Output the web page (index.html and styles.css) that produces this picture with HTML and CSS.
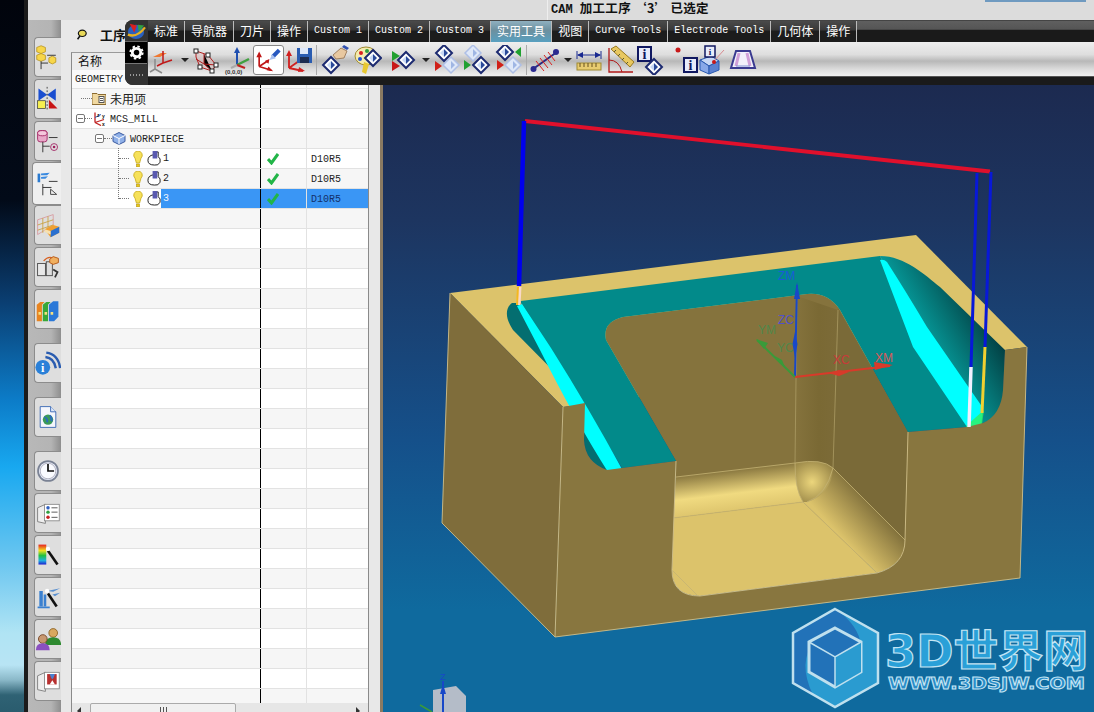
FILE: index.html
```html
<!DOCTYPE html>
<html lang="zh">
<head>
<meta charset="utf-8">
<title>CAM</title>
<link rel="stylesheet" href="styles.css">
</head>
<body>
<svg class="defs" width="0" height="0">
  <defs>
    <g id="dia"><polygon points="0,-8 8,0 0,8 -8,0" fill="#fff" stroke="#1c2a70" stroke-width="2"/><polygon points="0,-4 4,0 0,4" fill="#2a4a9a"/><polygon points="0,-4 -4,0 0,4" fill="#c8d8f4"/></g>
    <g id="diaf"><polygon points="0,-8 8,0 0,8 -8,0" fill="#dfe8f8" stroke="#aebfe6" stroke-width="1.5"/><polygon points="0,-4 4,0 0,4" fill="#9fb6e4"/></g>
    <g id="bulb"><path d="M5 0a4.2 4.2 0 0 1 3 7.2L6.6 12H3.4L2 7.2A4.2 4.2 0 0 1 5 0z" fill="#f6e15a" stroke="#c8a818" stroke-width=".8"/><rect x="3.4" y="13" width="3.2" height="3" fill="#e8c820" stroke="#a88810" stroke-width=".5"/></g>
    <g id="opi"><path d="M1 10q0-5 6-6v-3h5v5q3 2 2 6q-2 4-6 3q-7 0-7-5z" fill="#fff" stroke="#111" stroke-width="1"/><rect x="6" y="0" width="5" height="8" fill="#5a5ab0"/></g>
    <path id="chk" d="M1 6l3.5 4L11 1" fill="none" stroke="#22b548" stroke-width="3"/>
  </defs>
</svg>
<div class="screen">
  <aside class="desktop"></aside>
  <div class="app">
    <header class="titlebar">
      <div class="title-left"></div>
      <div class="title-main"><span class="cam">CAM</span> 加工工序 ‘3’ 已选定</div>
      <div class="title-progress"></div>
    </header>
    <div class="workspace">
      <nav class="rail">
        <div class="tab"><svg viewBox="0 0 30 30"><path d="M7 2l5 2v5l-5 2-5-2V4z" fill="#f7d64a" stroke="#b08a10" stroke-width=".8"/><path d="M7 11l5 2v5l-5 2-5-2v-5z" fill="#f7d64a" stroke="#b08a10" stroke-width=".8"/><path d="M20 14l4 2v5l-4 2-4-2v-5z" fill="#f7d64a" stroke="#b08a10" stroke-width=".8"/><path d="M7 20v9M7 22h8M14 13h10" stroke="#222" fill="none"/></svg></div>
        <div class="tab"><svg viewBox="0 0 30 30"><path d="M4 3l10 7 10-7v14l-10-7-10 7z" fill="#1a4ed0"/><rect x="3" y="17" width="9" height="9" fill="#f6ee50" stroke="#333" stroke-width=".8"/><path d="M16 16l10 10H16z" fill="#c81414"/><path d="M14 1v28" stroke="#333" stroke-dasharray="2 2"/></svg></div>
        <div class="tab"><svg viewBox="0 0 30 30"><rect x="3" y="3" width="11" height="13" rx="3" fill="#e8a8c8" stroke="#a02060"/><ellipse cx="8.500" cy="6" rx="5.500" ry="3" fill="#f4c8dc" stroke="#a02060"/><path d="M9 16v12M9 21h8M16 11h10" stroke="#222" fill="none"/><circle cx="22" cy="22" r="4" fill="none" stroke="#a02060"/><circle cx="22" cy="22" r="1.500" fill="#a02060"/></svg></div>
        <div class="tab active"><svg viewBox="0 0 30 30"><path d="M3 3h3v10H3z" fill="#2a7ad0"/><path d="M7 3l10-1-3 3H7zM7 7l8-1-3 3H7z" fill="#3a8ae0"/><path d="M9 15v13M9 19h10M16 12h10" stroke="#222" fill="none"/><path d="M18 21v6h7z" fill="none" stroke="#333"/></svg></div>
        <div class="tab"><svg viewBox="0 0 30 30"><path d="M3 9l18-6v12L3 26z" fill="none" stroke="#d89aa0"/><path d="M3 15l18-6M3 21l18-6M9 7v17M15 5v17" stroke="#c8a040"/><path d="M11 20l10-5 7 2v7l-10 5z" fill="#f0a030"/><path d="M18 29l10-5v-7l-10 5z" fill="#2a70d0"/><path d="M11 20l7 2v4l-7-3z" fill="#f6e0b0"/></svg></div>
        <div class="tab"><svg viewBox="0 0 30 30"><rect x="3" y="11" width="9" height="14" fill="#e8e8e8" stroke="#444"/><rect x="13" y="9" width="7" height="16" fill="#ddd" stroke="#444"/><path d="M10 8q6-7 13-2" fill="none" stroke="#d86020" stroke-width="1.500"/><path d="M21 3l6 2v5l-6 2-4-2V6z" fill="#f0b060" stroke="#b05010"/><path d="M21 18l5 3-3 6" fill="none" stroke="#333" stroke-width="2"/></svg></div>
        <div class="tab"><svg viewBox="0 0 30 30"><path d="M2 10l4-3h5l-3 3v19H2z" fill="#e88420"/><path d="M9 10l4-3h5l-3 3v19H9z" fill="#38a838"/><path d="M16 10l5-4h6v18l-5 5h-6z" fill="#2a78d8"/><path d="M4 20h3M11 20h3M18 20h3" stroke="#f6e080" stroke-width="3"/></svg></div>
        <div class="tab tab-gap"><svg viewBox="0 0 30 30"><circle cx="9" cy="20" r="8.500" fill="#2a80d8"/><text class="icon-i" x="9" y="25">i</text><path d="M12 8q10 1 12 13M13 3q14 2 16 18" fill="none" stroke="#2a5cb0" stroke-width="2.800"/></svg></div>
        <div class="tab tab-gap"><svg viewBox="0 0 30 30"><path d="M6 3h12l6 6v18H6z" fill="#f4f6fc" stroke="#3060b0"/><path d="M18 3v6h6" fill="#dce6f8" stroke="#3060b0"/><circle cx="15" cy="18" r="6" fill="#3a9a58"/><path d="M11 15q4 2 3 6M17 13q3 3 2 7" stroke="#2a6ac0" fill="none" stroke-width="2"/></svg></div>
        <div class="tab tab-gap"><svg viewBox="0 0 30 30"><circle cx="15" cy="15" r="11.500" fill="#e8ecf8" stroke="#7a8294" stroke-width="2"/><circle cx="15" cy="15" r="9" fill="#fafbff" stroke="#aab"/><path d="M15 7v8h7" fill="none" stroke="#111" stroke-width="2"/></svg></div>
        <div class="tab"><svg viewBox="0 0 30 30"><path d="M3 9l9-4v22l-9-2z" fill="#eee" stroke="#777"/><rect x="11" y="5" width="17" height="19" fill="#fff" stroke="#888"/><circle cx="15" cy="9" r="2" fill="#3060c0"/><circle cx="15" cy="14" r="2" fill="#30a040"/><circle cx="15" cy="20" r="2" fill="#c82020"/><path d="M19 9h7M19 14h7M19 20h7" stroke="#444"/></svg></div>
        <div class="tab"><svg viewBox="0 0 30 30"><defs><linearGradient id="rb" x1="0" y1="0" x2="0" y2="1"><stop offset="0" stop-color="#e82020"/><stop offset=".3" stop-color="#f0e020"/><stop offset=".55" stop-color="#20c040"/><stop offset=".8" stop-color="#20b0e0"/><stop offset="1" stop-color="#2020d0"/></linearGradient></defs><rect x="4" y="3" width="9" height="23" fill="url(#rb)"/><path d="M15 10l11 16" stroke="#111" stroke-width="3"/><circle cx="15" cy="8" r="2.500" fill="#fff"/></svg></div>
        <div class="tab"><svg viewBox="0 0 30 30"><path d="M5 26V8h4v18zM10 12h3v14h-3z" fill="#3a80d0"/><path d="M3 27h14" stroke="#3a80d0" stroke-width="2"/><path d="M14 8l15-3-8 4zM20 12l9-2-6 4z" fill="#5a90d0"/><path d="M15 11l10 15" stroke="#111" stroke-width="3"/><circle cx="14" cy="8" r="2.500" fill="#fff"/></svg></div>
        <div class="tab"><svg viewBox="0 0 30 30"><circle cx="21" cy="8" r="5" fill="#d8a860" stroke="#8a6020"/><path d="M12 20q1-7 9-7t9 7v2H12z" fill="#2e8a30"/><circle cx="9" cy="15" r="5" fill="#c89870" stroke="#704020"/><path d="M1 28q0-8 8-8t8 8z" fill="#8a50c0"/></svg></div>
        <div class="tab"><svg viewBox="0 0 30 30"><path d="M3 9l9-4v22l-9-2z" fill="#eee" stroke="#777"/><rect x="11" y="5" width="17" height="19" fill="#fff" stroke="#888"/><rect x="14" y="7" width="11" height="12" fill="#b83030"/><path d="M17 7q2 6 3 6t3-6z" fill="#4a80d0"/><path d="M17 19l3-5 3 5z" fill="#fff"/></svg></div>
      </nav>
      <section class="panel">
        <div class="panel-title">
          <svg class="panel-icon" viewBox="0 0 14 14"><ellipse cx="8" cy="5.500" rx="5" ry="4" fill="#e8d858" stroke="#111" stroke-width="1.500"/><path d="M5 9l-3 4" stroke="#111" stroke-width="2"/></svg>
          <span>工序</span>
        </div>
        <div class="table">
          <div class="head-row"><span class="head-name">名称</span></div>
          <div class="row sub"><div class="c-name geo">GEOMETRY</div><div class="c-stat"></div><div class="c-tool"></div></div>
          <div class="rows">
            <div class="row"><div class="c-name lv0"><i class="twig w11"></i><svg class="node" viewBox="0 0 14 14"><path d="M0 2h5l1 1h8v10H0z" fill="#f0d8a0" stroke="#8a6a30"/><rect x="7" y="5" width="5" height="6" fill="#fff" stroke="#555"/><path d="M8 7h3M8 9h3" stroke="#555"/></svg><span class="zh">未用项</span></div><div class="c-stat"></div><div class="c-tool"></div></div>
            <div class="row"><div class="c-name lv1"><i class="minus"></i><i class="twig w7"></i><svg class="node" viewBox="0 0 14 14"><path d="M3 11V1M3 11l9-3M3 11l6 3" stroke="#c02020" fill="none" stroke-width="1.300"/><path d="M3 6l6-3" stroke="#2a60c0"/><text class="axis-mini" x="5" y="5">z</text><text class="axis-mini" x="10" y="6">y</text><text class="axis-mini" x="10" y="14">x</text></svg><span class="mono">MCS_MILL</span></div><div class="c-stat"></div><div class="c-tool"></div></div>
            <div class="row"><div class="c-name lv2"><i class="minus"></i><i class="twig w8"></i><svg class="node" viewBox="0 0 14 14"><path d="M7 1l6 3v6l-6 3-6-3V4z" fill="#8fb0e8" stroke="#3a5aa0"/><path d="M1 4l6 3 6-3M7 7v6" stroke="#fff" fill="none"/></svg><span class="mono">WORKPIECE</span></div><div class="c-stat"></div><div class="c-tool"></div></div>
            <div class="row"><div class="c-name lv3"><i class="twig w10 riser"></i><svg class="bulb" viewBox="0 0 10 16"><use href="#bulb"/></svg><svg class="node" viewBox="0 0 15 16"><use href="#opi"/></svg><span class="mono label">1</span></div><div class="c-stat"><svg class="check" viewBox="0 0 12 12"><use href="#chk"/></svg></div><div class="c-tool mono">D10R5</div></div>
            <div class="row"><div class="c-name lv3"><i class="twig w10 riser"></i><svg class="bulb" viewBox="0 0 10 16"><use href="#bulb"/></svg><svg class="node" viewBox="0 0 15 16"><use href="#opi"/></svg><span class="mono label">2</span></div><div class="c-stat"><svg class="check" viewBox="0 0 12 12"><use href="#chk"/></svg></div><div class="c-tool mono">D10R5</div></div>
            <div class="row selected"><div class="c-name lv3"><i class="twig w10 riser last"></i><svg class="bulb" viewBox="0 0 10 16"><use href="#bulb"/></svg><svg class="node" viewBox="0 0 15 16"><use href="#opi"/></svg><span class="mono label">3</span></div><div class="c-stat"><svg class="check" viewBox="0 0 12 12"><use href="#chk"/></svg></div><div class="c-tool mono">D10R5</div></div>
            <div class="row"><div class="c-name"></div><div class="c-stat"></div><div class="c-tool"></div></div>
            <div class="row"><div class="c-name"></div><div class="c-stat"></div><div class="c-tool"></div></div>
            <div class="row"><div class="c-name"></div><div class="c-stat"></div><div class="c-tool"></div></div>
            <div class="row"><div class="c-name"></div><div class="c-stat"></div><div class="c-tool"></div></div>
            <div class="row"><div class="c-name"></div><div class="c-stat"></div><div class="c-tool"></div></div>
            <div class="row"><div class="c-name"></div><div class="c-stat"></div><div class="c-tool"></div></div>
            <div class="row"><div class="c-name"></div><div class="c-stat"></div><div class="c-tool"></div></div>
            <div class="row"><div class="c-name"></div><div class="c-stat"></div><div class="c-tool"></div></div>
            <div class="row"><div class="c-name"></div><div class="c-stat"></div><div class="c-tool"></div></div>
            <div class="row"><div class="c-name"></div><div class="c-stat"></div><div class="c-tool"></div></div>
            <div class="row"><div class="c-name"></div><div class="c-stat"></div><div class="c-tool"></div></div>
            <div class="row"><div class="c-name"></div><div class="c-stat"></div><div class="c-tool"></div></div>
            <div class="row"><div class="c-name"></div><div class="c-stat"></div><div class="c-tool"></div></div>
            <div class="row"><div class="c-name"></div><div class="c-stat"></div><div class="c-tool"></div></div>
            <div class="row"><div class="c-name"></div><div class="c-stat"></div><div class="c-tool"></div></div>
            <div class="row"><div class="c-name"></div><div class="c-stat"></div><div class="c-tool"></div></div>
            <div class="row"><div class="c-name"></div><div class="c-stat"></div><div class="c-tool"></div></div>
            <div class="row"><div class="c-name"></div><div class="c-stat"></div><div class="c-tool"></div></div>
            <div class="row"><div class="c-name"></div><div class="c-stat"></div><div class="c-tool"></div></div>
            <div class="row"><div class="c-name"></div><div class="c-stat"></div><div class="c-tool"></div></div>
            <div class="row"><div class="c-name"></div><div class="c-stat"></div><div class="c-tool"></div></div>
            <div class="row"><div class="c-name"></div><div class="c-stat"></div><div class="c-tool"></div></div>
            <div class="row"><div class="c-name"></div><div class="c-stat"></div><div class="c-tool"></div></div>
            <div class="row"><div class="c-name"></div><div class="c-stat"></div><div class="c-tool"></div></div>
            <div class="row"><div class="c-name"></div><div class="c-stat"></div><div class="c-tool"></div></div>
          </div>
          <div class="scrollbar"><span class="arrow-l"></span><span class="thumb"><i></i></span><span class="arrow-r"></span></div>
        </div>
      </section>
      <main class="viewport">
        <svg class="model" viewBox="383 20 711 692">
          <defs>
            <linearGradient id="slotR" gradientUnits="userSpaceOnUse" x1="925" y1="345" x2="985" y2="310"><stop offset="0" stop-color="#06a0a0"/><stop offset=".5" stop-color="#056f70"/><stop offset="1" stop-color="#023c40"/></linearGradient>
            <linearGradient id="fillVert" x1="0" y1="0" x2="1" y2="0"><stop offset="0" stop-color="#85733d"/><stop offset=".55" stop-color="#7a6934"/><stop offset="1" stop-color="#7c6b38"/></linearGradient>
            <linearGradient id="fillBack" gradientUnits="userSpaceOnUse" x1="735" y1="470" x2="740" y2="512"><stop offset="0" stop-color="#8a7840"/><stop offset=".55" stop-color="#f0da80"/><stop offset="1" stop-color="#dcc36b"/></linearGradient>
            <linearGradient id="fillRight" gradientUnits="userSpaceOnUse" x1="878" y1="505" x2="842" y2="538"><stop offset="0" stop-color="#7a6a38"/><stop offset="1" stop-color="#dcc36b"/></linearGradient>
            <radialGradient id="corner" gradientUnits="userSpaceOnUse" cx="812" cy="482" r="24"><stop offset="0" stop-color="#ecd67c"/><stop offset="1" stop-color="#9a8748"/></radialGradient>
          </defs>
          <polygon points="450,293 916,235 1027,347 563,407" fill="#dcc36b"/>
          <path d="M512 303C505 308 505 318 513 330L585 403L584 440Q585 462 607 470L622 470L520 303Z" fill="#046e70"/>
          <path d="M880 256C905 256 925 275 940 287L1005 350L1003 392Q1000 418 983 423L967 427Z" fill="url(#slotR)"/>
          <path d="M606 340Q602 322 623 317L807 294Q828 292 840 310L908 432L908 560L672 580L676 461Z" fill="#85733d"/>
          <polygon points="797,296 838,310 833,468 795,463" fill="url(#fillVert)"/>
          <polygon points="838,308 908,432 905,540 833,468" fill="#7a6a38"/>
          <polygon points="676,477 795,463 803,502 673,518" fill="url(#fillBack)"/>
          <path d="M833 468L905 540Q905 565 877 573L803 502Q826 496 833 468Z" fill="url(#fillRight)"/>
          <path d="M795 463Q822 458 833 468Q832 494 807 502L803 502Q795 490 795 463Z" fill="url(#corner)"/>
          <path d="M673 518L803 502L877 573L700 596Q672 596 672 570Z" fill="#dcc36b"/>
          <path d="M676 477L795 463Q822 458 833 468L905 540M673 518L803 502L877 573M672 570L698 596M803 502Q795 490 795 463M807 502Q826 496 833 468" fill="none" stroke="#c4b273" stroke-width=".8"/>
          <path d="M797 296L795 463M838 310L833 468" fill="none" stroke="#b0a068" stroke-width=".7"/>
          <path d="M521 301L880 256L967 427L908 432L840 310Q828 292 807 294L623 317Q602 322 606 340L676 461L622 468Q570 380 521 303Z" fill="#028a8a"/>
          <path d="M517 306L522 304L551 348Q590 410 623 471L608 472Q575 420 540 350Z" fill="#00ffff"/>
          <path d="M880 260Q884 259 887 262Q905 290 927 327L983 408L981 427L967 427L913 347Z" fill="#00ffff"/>
          <path d="M607 471L623 471L620 475L610 475Z" fill="#30f060"/>
          <path d="M966 426L984 410L982 424Q975 430 968 428Z" fill="#30f060" opacity=".8"/>
          <path d="M563 407L585 403L584 440Q585 462 607 470L622 468L676 461L672 570Q672 596 700 596L877 573Q905 565 905 540L908 432L967 427L983 423Q1001 415 1003 390L1005 350L1027 347L1020 578L555 637Z" fill="#88763f"/>
          <polygon points="450,293 563,407 555,637 442,523" fill="#7f6d3b"/>
          <path d="M450 293L442 523L555 637L1020 578L1027 347M563 407L555 637M676 461L672 570Q672 596 700 596L877 573Q905 565 905 540L908 432" fill="none" stroke="#d0c08a" stroke-width=".9"/>
          <line x1="525" y1="121" x2="990" y2="171.500" stroke="#e0102c" stroke-width="3.800"/>
          <line x1="524" y1="121" x2="519" y2="286" stroke="#0000ee" stroke-width="4.500"/>
          <line x1="519.500" y1="287" x2="518.500" y2="305" stroke="#f8d8c8" stroke-width="4"/>
          <line x1="518" y1="287" x2="517" y2="305" stroke="#f4b820" stroke-width="2"/>
          <line x1="977" y1="173" x2="971" y2="367" stroke="#0818d8" stroke-width="3"/>
          <line x1="991" y1="172" x2="985" y2="347" stroke="#0818d8" stroke-width="3"/>
          <line x1="971" y1="367" x2="969" y2="427" stroke="#f0f0ff" stroke-width="3.500"/>
          <line x1="985" y1="347" x2="982" y2="413" stroke="#f0d030" stroke-width="3"/>
          <path d="M795 377L797 285" stroke="#1848c8" stroke-width="2" fill="none"/>
          <path d="M797 282l3 17h-6zM795 332l2.500 12-2.500 14-2.500-14z" fill="#1848c8"/>
          <path d="M795 377L890 366" stroke="#d83a2a" stroke-width="2"/>
          <path d="M893 365l-18 5-1-8zM828 373l11 3 10-4-10-2z" fill="#d83a2a"/>
          <path d="M795 377L757 340" stroke="#3a9a3a" stroke-width="2"/>
          <path d="M756 339l12 4-4 6zM775 356l7 9 3 2-3-7z" fill="#3a9a3a"/>
          <text class="axis zm" x="778" y="280">ZM</text>
          <text class="axis zc" x="778" y="324">ZC</text>
          <text class="axis ym" x="758" y="334">YM</text>
          <text class="axis ym" x="777" y="352">YC</text>
          <text class="axis xc" x="833" y="364">XC</text>
          <text class="axis xm" x="875" y="362">XM</text>
          <path d="M433 690L456 686L466 696V712H433Z" fill="#b4bcc8"/>
          <path d="M443 681V712" stroke="#1848c8" stroke-width="2"/>
          <path d="M443 684l3 10h-6z" fill="#1848c8"/>
          <text class="axis tiny-z" x="440" y="680">Z</text>
          <path d="M420 705L432 712" stroke="#3a9a3a" stroke-width="1.500"/>
          <g class="logo">
            <polygon points="835,609 878,633 878,683 835,707 793,683 793,633" fill="#2a9bd0"/>
            <path d="M835 609L793 633V683L813 695Q797 662 815 640L860 640Q855 622 835 609Z" fill="#2272b8"/>
            <polygon points="835,628 861,642 861,672 835,687 809,672 809,642" fill="#2272b8" stroke="#bfe0ee" stroke-width="3"/>
            <polygon points="835,657 861,642 861,672 835,687" fill="#2a9bd0"/>
            <path d="M809 642L835 657L861 642M835 657V687" fill="none" stroke="#bfe0ee" stroke-width="1.500"/>
            <polygon points="835,609 878,633 878,683 835,707 793,683 793,633" fill="none" stroke="#bfe0ee" stroke-width="2.500"/>
            <text class="logo-main" x="885" y="667" textLength="203" lengthAdjust="spacingAndGlyphs">3D世界网</text>
            <text class="logo-sub" x="888" y="689" textLength="197" lengthAdjust="spacingAndGlyphs">WWW.3DSJW.COM</text>
          </g>
        </svg>
      </main>
    </div>
  </div>
</div>
<div class="toolbar">
  <div class="tool-side">
    <div class="side-logo"><svg viewBox="0 0 22 20"><ellipse cx="11" cy="11" rx="9" ry="8" fill="#2a60c0"/><path d="M4 2l8 2-3 8z" fill="#d82020"/><path d="M13 3l7 1-6 7z" fill="#30a040"/><path d="M2 14q10 4 19-8" fill="none" stroke="#e8b020" stroke-width="2.500"/></svg></div>
    <div class="side-gear"><svg viewBox="0 0 16 16"><circle cx="8" cy="8" r="4.500" fill="none" stroke="#fff" stroke-width="3"/><circle cx="8" cy="8" r="6.600" fill="none" stroke="#fff" stroke-width="2" stroke-dasharray="2.600 2.600"/></svg></div>
    <div class="side-grip"></div>
  </div>
  <div class="tool-body">
    <div class="tabs">
      <span class="t">标准</span><span class="t">导航器</span><span class="t">刀片</span><span class="t">操作</span><span class="t m">Custom 1</span><span class="t m">Custom 2</span><span class="t m">Custom 3</span><span class="t on">实用工具</span><span class="t">视图</span><span class="t m">Curve Tools</span><span class="t m">Electrode Tools</span><span class="t">几何体</span><span class="t">操作</span>
    </div>
    <div class="tools">
      <svg class="ti" viewBox="0 0 30 30"><path d="M7 14L7 24L14 28M7 24L2 27" stroke="#8a8a8a" fill="none" stroke-width="1.500"/><path d="M5 12l8-4h6l-7 4z" fill="#f07830"/><path d="M15 18V6M15 18l9-3M15 18l-6 3" stroke="#c01818" fill="none" stroke-width="1.500"/></svg>
      <i class="dd dd-a"></i>
      <svg class="ti" viewBox="0 0 30 30"><path d="M6 6l12 4 8 10-4 6-12-4-4-10z" fill="#e0c0c0" fill-opacity=".5" stroke="#b02020"/><path d="M14 9v10l8 7M14 19l-8-5M14 19l12 1" stroke="#b02020"/><g fill="#fff" stroke="#222"><rect x="4" y="4" width="4" height="4"/><rect x="16" y="8" width="4" height="4"/><rect x="24" y="18" width="4" height="4"/><rect x="20" y="24" width="4" height="4"/><rect x="8" y="20" width="4" height="4"/></g></svg>
      <svg class="ti ml2" viewBox="0 0 30 30"><path d="M15 20V4" stroke="#2050b0" stroke-width="2"/><path d="M15 2l3 6h-6z" fill="#2050b0"/><path d="M15 20l12-6" stroke="#40a040" stroke-width="2.500"/><path d="M15 20l8 3" stroke="#c02020" stroke-width="2"/><path d="M15 20l-6 3" stroke="#aaa" stroke-width="2"/><text class="origin" x="3" y="29">(0,0,0)</text></svg>
      <svg class="ti selected-tool" viewBox="0 0 30 30"><path d="M5 22V9M5 22l13 4M5 22l9-6" stroke="#c01818" fill="none" stroke-width="1.800"/><path d="M5 6l3 6H2zM20 27l-7-1 2-4zM16 14l-1 5-4-3z" fill="#c01818"/><path d="M18 10l7-7 3 3-7 7z" fill="#2858c0"/><path d="M16 15l3-6 4 4z" fill="#a8c0f0"/></svg>
      <svg class="ti" viewBox="0 0 30 30"><path d="M5 23V8M5 23l14 3M5 23l10-7" stroke="#d02020" fill="none" stroke-width="1.800"/><path d="M5 5l3 6H2zM21 26l-7 1 1-5z" fill="#d02020"/><rect x="13" y="3" width="15" height="15" fill="#2a5cb0"/><rect x="16" y="3" width="8" height="6" fill="#dfe8f8"/><rect x="16" y="12" width="9" height="6" fill="#1c2c50"/></svg>
      <i class="sep"></i>
      <svg class="ti" viewBox="0 0 30 30"><use href="#dia" x="11" y="20"/><path d="M13 10l8-7 6 3-3 7-8 1z" fill="#e8c8a0" stroke="#a08060"/><path d="M22 2l5 3 2-2-5-3z" fill="#3050b0"/></svg>
      <svg class="ti ml2" viewBox="0 0 30 30"><ellipse cx="14" cy="11" rx="11" ry="9" fill="#f4ecb0" stroke="#a08a30"/><circle cx="9" cy="8" r="2" fill="#d82020"/><circle cx="15" cy="6" r="2" fill="#30a040"/><circle cx="8" cy="14" r="2" fill="#2050d0"/><path d="M12 17l-2 10 4 2 3-10z" fill="#e8c830"/><use href="#dia" x="21" y="13"/></svg>
      <svg class="ti ml6" viewBox="0 0 30 30"><path d="M4 6l8 5-8 5z" fill="#22a030"/><path d="M4 16l8 5-8 5z" fill="#c81818"/><use href="#dia" x="18" y="15"/></svg>
      <i class="dd"></i>
      <svg class="ti" viewBox="0 0 30 30"><use href="#dia" x="13" y="8"/><path d="M4 16l7 5-7 5z" fill="#d02018"/><use href="#diaf" x="20" y="20"/></svg>
      <svg class="ti ml1" viewBox="0 0 30 30"><use href="#diaf" x="11" y="8"/><path d="M2 15l7 5-7 5z" fill="#20a030"/><use href="#dia" x="19" y="20"/></svg>
      <svg class="ti ml2" viewBox="0 0 30 30"><use href="#dia" x="11" y="7"/><path d="M27 2v10l-6-5z" fill="#20a030"/><path d="M3 15l7 5-7 5z" fill="#d02018"/><use href="#diaf" x="19" y="20"/></svg>
      <i class="sep"></i>
      <svg class="ti" viewBox="0 0 30 30"><path d="M3 24L27 7" stroke="#2a2a80" stroke-width="2"/><circle cx="3.500" cy="24" r="3" fill="#2a2a90"/><circle cx="26" cy="7" r="3" fill="#2a2a90"/><path d="M6 16l8 10M10 13l8 10M14 10l8 10M18 7l7 9" stroke="#d82020"/></svg>
      <i class="dd dd-c"></i>
      <svg class="ti" viewBox="0 0 30 30"><path d="M4 10h22" stroke="#1a2a90"/><path d="M3 6v8M27 6v8" stroke="#1a2a90"/><path d="M3 10l6-3v6zM27 10l-6-3v6z" fill="#1a2a90"/><rect x="3" y="18" width="24" height="7" fill="#e8cc70" stroke="#a08a30"/><path d="M6 18v4M10 18v4M14 18v4M18 18v4M22 18v4" stroke="#665020"/></svg>
      <svg class="ti ml1" viewBox="0 0 30 30"><path d="M4 3v24h24" fill="none" stroke="#b01818" stroke-width="1.300"/><path d="M4 15q10 0 13 12" fill="none" stroke="#b01818"/><path d="M6 4l5-3 18 16-4 5z" fill="#e8c860" stroke="#9a7a20"/><path d="M11 5l-2 2M15 9l-2 2M19 13l-2 2M23 17l-2 2" stroke="#553"/></svg>
      <svg class="ti" viewBox="0 0 30 30"><rect x="3" y="2" width="13" height="14" fill="#e8ecfa" stroke="#101860" stroke-width="2"/><text class="icon-b" x="9.500" y="14">i</text><use href="#dia" x="19" y="22"/></svg>
      <svg class="ti ml6" viewBox="0 0 30 30"><circle cx="7" cy="5" r="2.500" fill="#c81818"/><rect x="13" y="13" width="13" height="14" fill="#e8ecfa" stroke="#101860" stroke-width="2"/><text class="icon-b" x="19.500" y="25">i</text></svg>
      <svg class="ti tight" viewBox="0 0 30 30"><path d="M4 15l11-4 8 5-10 5z" fill="#c8d8f4" stroke="#2a5ab0"/><path d="M4 15v10l9 4v-8z" fill="#88a8e8" stroke="#2a5ab0"/><path d="M13 21v8l10-4v-9z" fill="#5a80d0" stroke="#2a5ab0"/><rect x="9" y="1" width="10" height="11" fill="#e8ecfa" stroke="#101860" stroke-width="1.500"/><text class="icon-s" x="14" y="10">i</text><path d="M18 16l10-11" stroke="#d88a90"/><circle cx="18" cy="17" r="2" fill="#c81818"/></svg>
      <svg class="ti" viewBox="0 0 30 30"><path d="M8 6h14l5 17H3z" fill="#f2f0fa" stroke="#3a3a90" stroke-width="2"/><path d="M11 8l-3 13M19 8l3 13" stroke="#d0a0d8" stroke-width="3"/><path d="M8 21h14" stroke="#8090d0"/></svg>
    </div>
    <div class="tool-foot"></div>
  </div>
</div>
</body>
</html>
```

FILE: styles.css
```css
* { box-sizing: border-box; }
html, body { margin: 0; padding: 0; }
body { width: 1094px; height: 712px; overflow: hidden; position: relative; font-family: "Noto Sans CJK SC", "Liberation Sans", sans-serif; font-size: 12px; color: #222; }
.defs { position: absolute; }
.screen { display: flex; width: 1094px; height: 712px; }
.desktop { width: 28px; flex: none; border-right: 4px solid #1b1b1b; background: linear-gradient(180deg, #01040c 0, #020a18 200px, #0a3d70 300px, #0c7cc8 400px, #18a8f0 467px, #70c8f0 567px, #b0e4f4 633px, #b8e4f4 665px, #8ab8c8 680px, #2f6274 695px, #2a5c6e 712px); }
.app { flex: 1; min-width: 0; display: flex; flex-direction: column; }
.titlebar { height: 20px; flex: none; display: flex; background: #dcdcdc; }
.title-left { width: 520px; border-right: 1px solid #eee; }
.title-main { flex: 1; padding-left: 3px; font-size: 12.500px; font-weight: 700; line-height: 16px; color: #111; letter-spacing: .3px; }
.cam { font-family: "Liberation Mono", monospace; font-size: 12px; letter-spacing: 0; margin-right: 4px; }
.title-progress { width: 101px; height: 2px; background: #6f9ac0; margin-right: 8px; }
.workspace { flex: 1; display: flex; min-height: 0; }
.rail { width: 33px; flex: none; padding: 17px 0 0 6px; display: flex; flex-direction: column; gap: 2px; background: linear-gradient(90deg, #b8b8b8 0, #b4b4b4 70%, #8e8e8e 100%); overflow: hidden; }
.tab { width: 27px; height: 40px; flex: none; background: #dedede; border: 1px solid #8c8c8c; border-right: 0; border-radius: 4px 0 0 4px; display: flex; align-items: center; justify-content: flex-start; }
.tab svg { width: 26px; height: 26px; flex: none; margin-left: 0; }
.tab-gap { margin-top: 12px; }
.tab.active { width: 29px; height: 43px; margin: -1px 0 -2px -2px; background: #efefef; padding-left: 2px; }
.panel { width: 322px; flex: none; padding: 0 11px 0 10px; background: #e8e8e8; border-right: 3px solid #8a7a62; display: flex; flex-direction: column; }
.panel-title { height: 32px; flex: none; padding: 0 0 3px 5px; display: flex; align-items: center; gap: 13px; font-size: 13px; font-weight: 700; color: #111; white-space: nowrap; }
.panel-icon { width: 11px; height: 11px; flex: none; }
.table { flex: 1; min-height: 0; display: flex; flex-direction: column; border-left: 1px solid #8a8a8a; border-right: 1px solid #8a8a8a; border-top: 1px solid #9a9a9a; background: #fff; }
.head-row { height: 17px; flex: none; padding-left: 6px; line-height: 16px; background: #ececec; }
.head-name { font-size: 12px; color: #111; }
.row { height: 20px; flex: none; display: flex; border-bottom: 1px solid #e2e2e2; }
.rows { flex: 1; min-height: 0; overflow: hidden; }
.rows .row:nth-child(odd) { background: #f6f6f6; }
.row.sub { height: 19px; background: #fafafa; }
.c-name { width: 189px; flex: none; display: flex; align-items: center; border-right: 1px solid #000; position: relative; }
.c-stat { width: 46px; flex: none; display: flex; align-items: center; padding-left: 6px; border-right: 1px solid #e2e2e2; }
.c-tool { flex: 1; padding-left: 4px; line-height: 21px; }
.mono, .geo { font-family: "Liberation Mono", monospace; font-size: 10px; color: #222; }
.geo { padding-left: 3px; }
.zh { margin-left: 4px; font-size: 12px; color: #222; }
.lv0 { padding-left: 9px; }
.lv1 { padding-left: 4px; }
.lv2 { padding-left: 23px; }
.lv3 { padding-left: 47px; }
.minus { width: 9px; height: 9px; flex: none; border: 1px solid #777; border-radius: 2px; background: linear-gradient(#777, #777) center / 5px 1px no-repeat, #fff; }
.twig { height: 0; flex: none; border-top: 1px dotted #777; position: relative; }
.w7 { width: 7px; } .w8 { width: 8px; } .w10 { width: 10px; margin-right: 4px; } .w11 { width: 11px; }
.riser::before { content: ""; position: absolute; left: -1px; top: -11px; height: 21px; border-left: 1px dotted #777; }
.riser.last::before { height: 11px; }
.node { width: 14px; height: 15px; flex: none; }
.node + .mono { margin-left: 4px; padding-top: 1px; }
.bulb { width: 10px; height: 16px; flex: none; margin-right: 4px; }
.node + .label { flex: 1; align-self: stretch; line-height: 20px; margin-left: 0; padding: 0 0 0 2px; }
.selected .label { background: #3a96f5; color: #eef4ff; }
.selected .c-stat, .selected .c-tool { background: #3a96f5; }
.selected .c-tool { color: #12306a; }
.check { width: 12px; height: 12px; }
.scrollbar { height: 9px; flex: none; display: flex; align-items: flex-start; background: #e6e6e6; position: relative; }
.arrow-l { width: 0; height: 0; margin: 4px 5px 0 5px; border: 4px solid transparent; border-right-color: #333; border-left: 0; }
.thumb { width: 146px; height: 10px; margin-left: 4px; border: 1px solid #aaa; border-radius: 2px 2px 0 0; background: #f0f0f0; display: flex; justify-content: center; }
.thumb i { width: 7px; height: 5px; margin-top: 3px; background: repeating-linear-gradient(90deg, #555 0 1px, transparent 1px 3px); }
.arrow-r { width: 0; height: 0; margin: 4px 0 0 120px; border: 4px solid transparent; border-left-color: #333; border-right: 0; }
.viewport { flex: 1; min-width: 0; background: linear-gradient(180deg, #1c2a50 0, #1c2a50 65px, #1d3560 200px, #15508a 420px, #0f6a9e 590px, #0f6a9e 100%); }
.model { display: block; width: 711px; height: 692px; }
.axis { font-family: "Liberation Sans", sans-serif; font-size: 12px; }
.zm { fill: #1c5ad8; }
.zc { fill: #5050c8; }
.ym { fill: #3f8f50; opacity: .75; }
.xc { fill: #c83a3a; }
.xm { fill: #d85a5a; }
.tiny-z { font-size: 9px; fill: #1848c8; }
.logo-main { font-family: "DejaVu Sans", "Noto Sans CJK SC", sans-serif; font-weight: 700; font-size: 44px; fill: #2aa0d8; stroke: #c4e4f2; stroke-width: 1.200px; }
.logo-sub { font-family: "DejaVu Sans", sans-serif; font-weight: 700; font-size: 16px; fill: #2a8cc8; stroke: #c4e4f2; stroke-width: 1px; }
.toolbar { position: absolute; left: 125px; top: 20px; right: 0; height: 65px; display: flex; background: #1a1a1a; border-radius: 8px 0 0 8px; }
.tool-side { width: 22px; flex: none; display: flex; flex-direction: column; }
.side-logo { height: 22px; display: flex; justify-content: center; align-items: center; border-bottom: 1px solid #666; border-radius: 8px 0 0 0; background: #333; }
.side-logo svg { width: 20px; height: 18px; }
.side-gear { height: 22px; display: flex; justify-content: center; align-items: center; background: #000; border-bottom: 1px solid #777; }
.side-gear svg { width: 15px; height: 15px; }
.side-grip { flex: 1; background: repeating-linear-gradient(90deg, #999 0 1px, transparent 1px 3px) center / 13px 1px no-repeat, repeating-linear-gradient(90deg, #999 0 1px, transparent 1px 3px) center 11px / 13px 1px no-repeat, #333; border-radius: 0 0 0 8px; }
.tool-body { flex: 1; min-width: 0; display: flex; flex-direction: column; border-left: 1px solid #333; }
.tabs { height: 23px; flex: none; display: flex; border-top: 1px solid #444; border-bottom: 1px solid #eee; background: linear-gradient(180deg, #5f5f5f 0, #555 40%, #1a1a1a 42%, #1a1a1a 100%); }
.t { width: auto; padding: 0 6px; border-right: 1px solid #bbb; font-size: 12px; line-height: 20px; color: #fff; white-space: nowrap; background: linear-gradient(180deg, #4a4a4a 0, #3a3a3a 40%, #1c1c1c 50%, #1c1c1c 100%); }
.t.m { font-family: "Liberation Mono", monospace; font-size: 10px; }
.t.on { background: linear-gradient(180deg, #8fb0c0 0, #6c909f 45%, #58a0c0 100%); color: #fff; }
.tools { height: 33px; flex: none; display: flex; align-items: center; background: linear-gradient(180deg, #ededed 0, #dedede 35%, #b8b8b8 55%, #dcdcdc 80%, #f0f0f0 100%); padding-left: 0; overflow: hidden; }
.ti { width: 30px; height: 30px; flex: none; }
.ml1 { margin-left: 1px; } .ml2 { margin-left: 2px; } .ml6 { margin-left: 6px; }
.selected-tool { width: 31px; background: #fff; border: 1px solid #888; border-radius: 3px; margin-left: 1px; }
.tight { margin: 0 2px 0 -5px; }
.dd { width: 0; height: 0; flex: none; margin: 0 1px 0 4px; border: 4px solid transparent; border-top-color: #222; border-bottom: 0; }
.dd-a { margin-left: 3px; }
.dd-c { margin-right: 2px; }
.sep { width: 1px; height: 30px; flex: none; margin: 0 3px 0 2px; background: #aaa; }
.tool-foot { flex: 1; background: #1a1a1a; border-top: 1px solid #555; }
.icon-i, .icon-b, .icon-s { font-family: "Liberation Serif", serif; font-weight: 700; text-anchor: middle; }
.icon-i { font-size: 14px; fill: #fff; }
.icon-b { font-size: 14px; fill: #101860; }
.icon-s { font-size: 9px; fill: #101860; }
.origin { font-family: "Liberation Sans", sans-serif; font-size: 6px; font-weight: 700; fill: #333; }
.axis-mini { font-family: "Liberation Sans", sans-serif; font-size: 5px; font-weight: 700; fill: #111; }
```
